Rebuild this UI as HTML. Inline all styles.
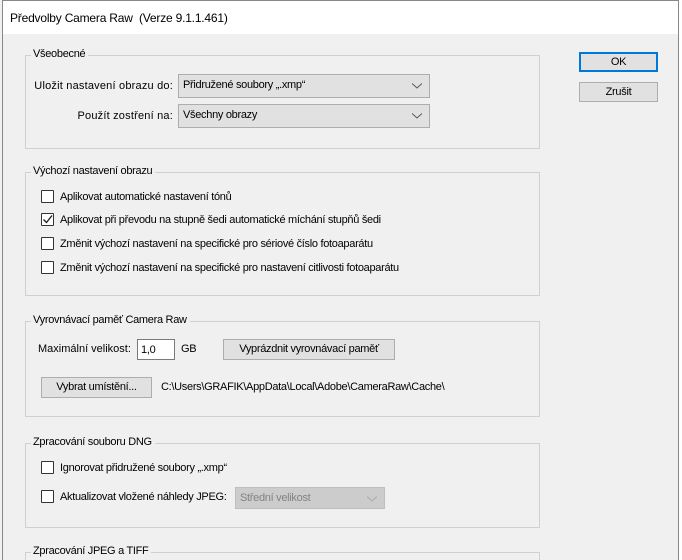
<!DOCTYPE html>
<html><head><meta charset="utf-8"><style>
*{box-sizing:border-box;margin:0;padding:0}
html,body{width:682px;height:560px;overflow:hidden}
body{background:#f0f0f0;font-family:"Liberation Sans",sans-serif;font-size:11px;letter-spacing:-0.3px;color:#000;position:relative}
.bl{position:absolute;left:2px;top:0;width:1px;height:560px;background:#888}
.br{position:absolute;left:678px;top:0;width:4px;height:560px;background:#fff;border-left:1px solid #888}
.bt{position:absolute;left:2px;top:0;width:677px;height:1px;background:#888}
.title{position:absolute;left:3px;top:1px;width:675px;height:33px;background:#fff;font-size:12px;letter-spacing:-0.2px}
.title span{position:absolute;left:7px;top:10px}
.a{position:absolute;white-space:nowrap}
.r{position:absolute;white-space:nowrap;text-align:right}
.grp{position:absolute;left:25px;width:515px;border:1px solid #d0d0d0}
.grp .lbl{position:absolute;left:5px;top:-8px;background:#f0f0f0;padding:0 3px 0 2px;white-space:nowrap}
.dd{position:absolute;border:1px solid #adadad;background:#e1e1e1;padding:4px 4px;height:24px}
.dd svg{position:absolute;right:7px;top:8px}
.btn{position:absolute;border:1px solid #adadad;background:#e1e1e1;text-align:center;line-height:18px}
.cb{position:absolute;width:13px;height:13px;border:1px solid #333;background:#fff;border-radius:1px}
</style></head><body>
<div class="title"><span>Předvolby Camera Raw&nbsp; (Verze 9.1.1.461)</span></div>
<div class="bl"></div><div class="bt"></div><div class="br"></div>

<div class="btn" style="left:579px;top:52px;width:79px;height:20px;border:2px solid #0078d7;line-height:16px">OK</div>
<div class="btn" style="left:579px;top:82px;width:79px;height:20px">Zrušit</div>

<div class="grp" style="top:55px;height:94px"><div class="lbl">Všeobecné</div></div>
<div class="r" style="left:0;width:173px;top:80px;letter-spacing:0.2px">Uložit nastavení obrazu do:</div>
<div class="dd" style="left:178px;top:74px;width:252px">Přidružené soubory „.xmp“<svg width="10" height="6"><path d="M0 0.5L5 5L10 0.5" stroke="#555" fill="none"/></svg></div>
<div class="r" style="left:0;width:173px;top:110px;letter-spacing:0.2px">Použít zostření na:</div>
<div class="dd" style="left:178px;top:104px;width:252px">Všechny obrazy<svg width="10" height="6"><path d="M0 0.5L5 5L10 0.5" stroke="#555" fill="none"/></svg></div>

<div class="grp" style="top:172px;height:124px"><div class="lbl">Výchozí nastavení obrazu</div></div>
<div class="cb" style="left:41px;top:190px"></div><div class="a" style="left:60px;top:191px">Aplikovat automatické nastavení tónů</div>
<div class="cb" style="left:41px;top:213px"><svg width="11" height="11" style="position:absolute;left:0;top:0"><path d="M1.5 5.5L4.5 8.5L10 1.5" stroke="#222" stroke-width="1.4" fill="none"/></svg></div><div class="a" style="left:60px;top:214px">Aplikovat při převodu na stupně šedi automatické míchání stupňů šedi</div>
<div class="cb" style="left:41px;top:237px"></div><div class="a" style="left:60px;top:238px">Změnit výchozí nastavení na specifické pro sériové číslo fotoaparátu</div>
<div class="cb" style="left:41px;top:261px"></div><div class="a" style="left:60px;top:262px">Změnit výchozí nastavení na specifické pro nastavení citlivosti fotoaparátu</div>

<div class="grp" style="top:321px;height:96px"><div class="lbl">Vyrovnávací paměť Camera Raw</div></div>
<div class="a" style="left:38px;top:343px;letter-spacing:0">Maximální velikost:</div>
<div class="a" style="left:137px;top:339px;width:38px;height:21px;border:1px solid #7a7a7a;background:#fff;padding:4px 3px">1,0</div>
<div class="a" style="left:181px;top:343px">GB</div>
<div class="btn" style="left:223px;top:339px;width:172px;height:21px">Vyprázdnit vyrovnávací paměť</div>
<div class="btn" style="left:41px;top:377px;width:111px;height:21px">Vybrat umístění...</div>
<div class="a" style="left:161px;top:381px">C:\Users\GRAFIK\AppData\Local\Adobe\CameraRaw\Cache\</div>

<div class="grp" style="top:443px;height:85px"><div class="lbl">Zpracování souboru DNG</div></div>
<div class="cb" style="left:41px;top:461px"></div><div class="a" style="left:60px;top:462px">Ignorovat přidružené soubory „.xmp“</div>
<div class="cb" style="left:41px;top:490px"></div><div class="a" style="left:60px;top:491px">Aktualizovat vložené náhledy JPEG:</div>
<div class="dd" style="left:235px;top:487px;width:150px;height:22px;background:#ccc;border-color:#bfbfbf;color:#838383">Střední velikost<svg width="10" height="6" style="top:8px"><path d="M0 0.5L5 5L10 0.5" stroke="#aaa" fill="none"/></svg></div>

<div class="grp" style="top:552px;height:20px"><div class="lbl">Zpracování JPEG a TIFF</div></div>
</body></html>
